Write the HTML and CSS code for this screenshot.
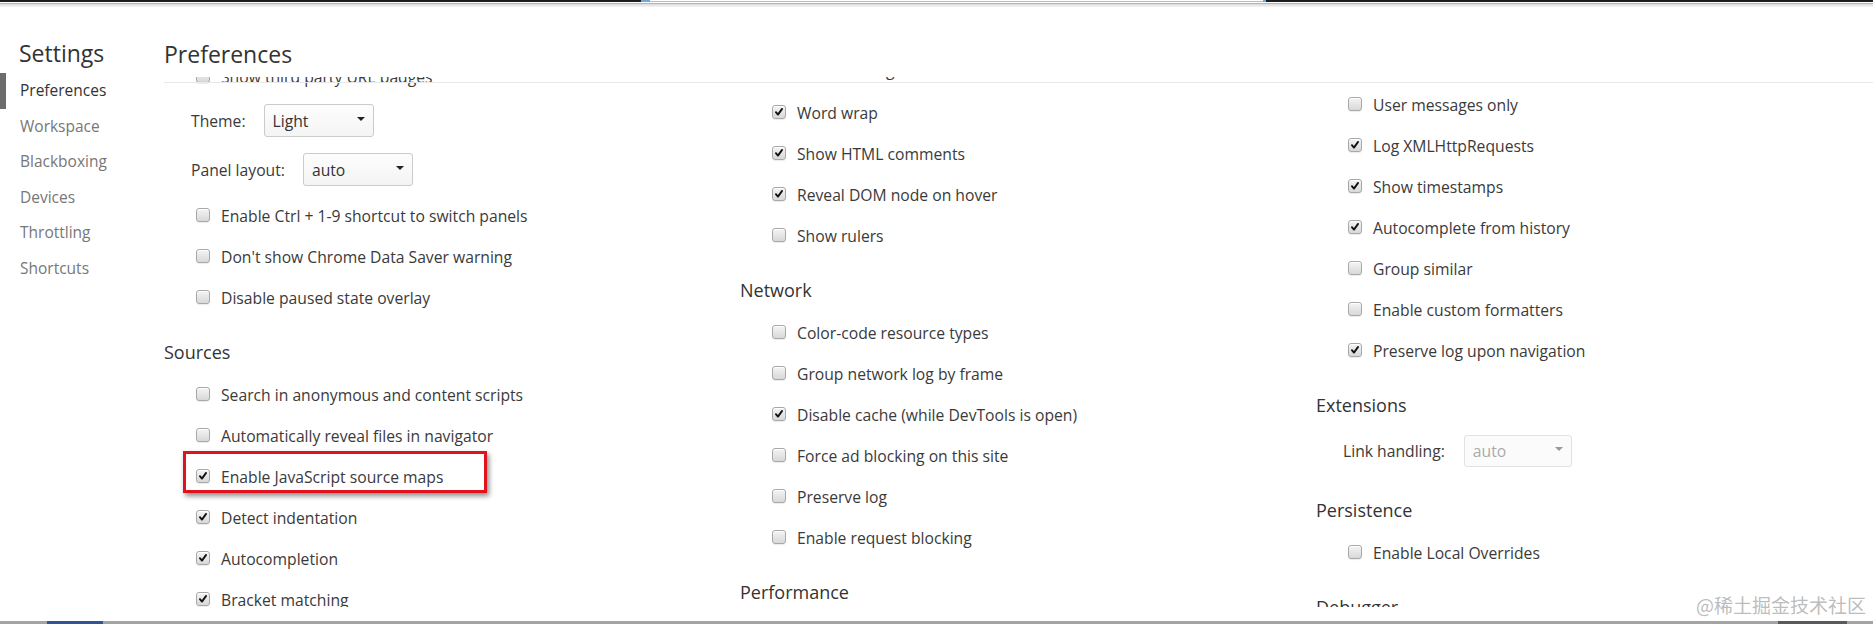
FILE: index.html
```html
<!DOCTYPE html>
<html lang="en">
<head>
<meta charset="utf-8">
<title>Settings</title>
<link rel="stylesheet" href="styles.css">
</head>
<body>
<div class="chrome">
  <div class="chrome-top">
    <span class="seg-dark seg-a"></span>
    <span class="seg-blue seg-b"></span>
    <span class="seg-light"></span>
    <span class="seg-blue seg-c"></span>
    <span class="seg-dark seg-d"></span>
  </div>
  <div class="chrome-gap"></div>
  <div class="chrome-line"></div>
  <div class="chrome-fade"></div>
</div>

<div class="window">
  <aside class="sidebar">
    <h1 class="sb-title">Settings</h1>
    <ul class="sb-list">
      <li class="sb-item active">Preferences</li>
      <li class="sb-item">Workspace</li>
      <li class="sb-item">Blackboxing</li>
      <li class="sb-item">Devices</li>
      <li class="sb-item">Throttling</li>
      <li class="sb-item">Shortcuts</li>
    </ul>
  </aside>

  <main class="main">
    <h2 class="main-title">Preferences</h2>
    <div class="scroll">
      <div class="columns">
        <section class="col col-1">
          <div class="row"><span class="cb"></span>Show third party URL badges</div>
          <div class="select-row"><span class="sel-label">Theme:</span><span class="select"><span>Light</span><span class="caret"></span></span></div>
          <div class="select-row"><span class="sel-label">Panel layout:</span><span class="select"><span>auto</span><span class="caret"></span></span></div>
          <div class="row"><span class="cb"></span>Enable Ctrl + 1-9 shortcut to switch panels</div>
          <div class="row"><span class="cb"></span>Don't show Chrome Data Saver warning</div>
          <div class="row"><span class="cb"></span>Disable paused state overlay</div>
          <h3 class="sec">Sources</h3>
          <div class="row"><span class="cb"></span>Search in anonymous and content scripts</div>
          <div class="row"><span class="cb"></span>Automatically reveal files in navigator</div>
          <div class="row marked"><span class="cb on"><svg viewBox="0 0 14 14"><path d="M3.4 7.2 L5.8 10 L10.6 3.4"/></svg></span>Enable JavaScript source maps<span class="highlight"></span></div>
          <div class="row"><span class="cb on"><svg viewBox="0 0 14 14"><path d="M3.4 7.2 L5.8 10 L10.6 3.4"/></svg></span>Detect indentation</div>
          <div class="row"><span class="cb on"><svg viewBox="0 0 14 14"><path d="M3.4 7.2 L5.8 10 L10.6 3.4"/></svg></span>Autocompletion</div>
          <div class="row"><span class="cb on"><svg viewBox="0 0 14 14"><path d="M3.4 7.2 L5.8 10 L10.6 3.4"/></svg></span>Bracket matching</div>
        </section>

        <section class="col col-2">
          <div class="row lead"><span class="cb"></span>Show user agent shadow DOM</div>
          <div class="row"><span class="cb on"><svg viewBox="0 0 14 14"><path d="M3.4 7.2 L5.8 10 L10.6 3.4"/></svg></span>Word wrap</div>
          <div class="row"><span class="cb on"><svg viewBox="0 0 14 14"><path d="M3.4 7.2 L5.8 10 L10.6 3.4"/></svg></span>Show HTML comments</div>
          <div class="row"><span class="cb on"><svg viewBox="0 0 14 14"><path d="M3.4 7.2 L5.8 10 L10.6 3.4"/></svg></span>Reveal DOM node on hover</div>
          <div class="row"><span class="cb"></span>Show rulers</div>
          <h3 class="sec">Network</h3>
          <div class="row"><span class="cb"></span>Color-code resource types</div>
          <div class="row"><span class="cb"></span>Group network log by frame</div>
          <div class="row"><span class="cb on"><svg viewBox="0 0 14 14"><path d="M3.4 7.2 L5.8 10 L10.6 3.4"/></svg></span>Disable cache (while DevTools is open)</div>
          <div class="row"><span class="cb"></span>Force ad blocking on this site</div>
          <div class="row"><span class="cb"></span>Preserve log</div>
          <div class="row"><span class="cb"></span>Enable request blocking</div>
          <h3 class="sec">Performance</h3>
        </section>

        <section class="col col-3">
          <div class="row"><span class="cb"></span>User messages only</div>
          <div class="row"><span class="cb on"><svg viewBox="0 0 14 14"><path d="M3.4 7.2 L5.8 10 L10.6 3.4"/></svg></span>Log XMLHttpRequests</div>
          <div class="row"><span class="cb on"><svg viewBox="0 0 14 14"><path d="M3.4 7.2 L5.8 10 L10.6 3.4"/></svg></span>Show timestamps</div>
          <div class="row"><span class="cb on"><svg viewBox="0 0 14 14"><path d="M3.4 7.2 L5.8 10 L10.6 3.4"/></svg></span>Autocomplete from history</div>
          <div class="row"><span class="cb"></span>Group similar</div>
          <div class="row"><span class="cb"></span>Enable custom formatters</div>
          <div class="row"><span class="cb on"><svg viewBox="0 0 14 14"><path d="M3.4 7.2 L5.8 10 L10.6 3.4"/></svg></span>Preserve log upon navigation</div>
          <h3 class="sec">Extensions</h3>
          <div class="select-row"><span class="sel-label">Link handling:</span><span class="select disabled"><span>auto</span><span class="caret"></span></span></div>
          <h3 class="sec">Persistence</h3>
          <div class="row"><span class="cb"></span>Enable Local Overrides</div>
          <h3 class="sec">Debugger</h3>
        </section>
      </div>
    </div>
  </main>
</div>

<div class="bottom">
  <span class="bt-gap1"></span>
  <span class="bt-blue"></span>
  <span class="bt-fill"></span>
  <span class="bt-dark"></span>
  <span class="bt-gap2"></span>
</div>

<div class="watermark">@稀土掘金技术社区</div>
</body>
</html>
```

FILE: styles.css
```css
* { box-sizing: border-box; }

html, body {
  margin: 0;
  height: 624px;
  overflow: hidden;
  background: #fff;
}

body {
  font-family: "Open Sans", "Noto Sans", sans-serif;
  color: #3a3a3a;
  display: flex;
  flex-direction: column;
  position: relative;
}

/* top window chrome */
.chrome { height: 7px; flex: none; display: flex; flex-direction: column; }
.chrome-top { height: 2px; display: flex; }
.seg-dark { background: #1e1e1e; }
.seg-a { width: 641px; }
.seg-b { width: 9px; }
.seg-blue { background: #6fa8dc; }
.seg-light { width: 613px; background: #fff; border-bottom: 1px solid #b9b9b9; }
.seg-c { width: 3px; }
.seg-d { flex: 1; }
.chrome-gap { height: 1px; background: #fff; }
.chrome-line { height: 1px; background: #b4b4b4; }
.chrome-fade { height: 3px; background: linear-gradient(#dcdcdc, #f4f4f4); }

/* layout */
.window { flex: 1; display: flex; min-height: 0; }

.sidebar { width: 164px; flex: none; }
.sb-title {
  margin: 0;
  padding: 31px 0 0 19px;
  font-size: 23px;
  line-height: 30px;
  font-weight: 400;
  color: #333;
}
.sb-list { margin: 5px 0 0; padding: 0; list-style: none; }
.sb-item {
  font-size: 15.5px;
  line-height: 35.6px;
  color: #777;
  padding-left: 14px;
  border-left: 6px solid transparent;
}
.sb-item.active { color: #333; border-left-color: #6c6c6c; }

.main { flex: 1; min-width: 0; display: flex; flex-direction: column; }
.main-title {
  margin: 0;
  font-size: 23px;
  line-height: 30px;
  font-weight: 400;
  color: #333;
  padding: 32px 0 8px;
}

.scroll { height: 530px; overflow: hidden; flex: none; position: relative; }
.scroll::before {
  content: "";
  position: absolute;
  left: 0;
  right: 0;
  top: 5px;
  height: 1px;
  background: #e8e8e8;
  z-index: 1;
}
.columns { display: grid; grid-template-columns: 576px 576px 1fr; align-items: start; }
.col-1 { margin-top: -22px; }
.col-2 { margin-top: -31px; }
.col-3 { margin-top: 6px; }

.sec {
  margin: 0;
  font-size: 18px;
  line-height: 22px;
  font-weight: 400;
  color: #333;
  padding: 24px 0 10px;
}

.row {
  height: 41px;
  display: flex;
  align-items: center;
  padding-left: 32px;
  padding-top: 2px;
  font-size: 15.7px;
  white-space: nowrap;
}
.row.lead { height: 45px; }

.cb {
  width: 14px;
  height: 14px;
  flex: none;
  margin-right: 11px;
  border: 1px solid #a8a8a8;
  border-radius: 3px;
  background: linear-gradient(#f4f4f4, #d8d8d8);
  box-shadow: inset 0 1px 0 #fff, 0 1px 1px rgba(0, 0, 0, 0.08);
  position: relative;
  top: -1px;
}
.cb svg { display: block; width: 12px; height: 12px; }
.cb svg path { fill: none; stroke: #111; stroke-width: 2.2; stroke-linecap: round; stroke-linejoin: round; }

.select-row {
  height: 49px;
  display: flex;
  align-items: center;
  padding-left: 27px;
  font-size: 15.7px;
  white-space: nowrap;
}
.select {
  margin-left: 18px;
  width: 110px;
  height: 33px;
  border: 1px solid #cbcbcb;
  border-radius: 3px;
  background: linear-gradient(#fdfdfd, #f4f4f4);
  display: flex;
  align-items: center;
  justify-content: space-between;
  padding: 0 8px 0 8px;
  color: #333;
}
.caret {
  width: 0;
  height: 0;
  border-left: 4px solid transparent;
  border-right: 4px solid transparent;
  border-top: 4px solid #222;
  margin-top: -4px;
}
.select.disabled { margin-left: 19px; border-color: #e2e2e2; background: #fbfbfb; color: #aaa; width: 108px; height: 32px; }
.select.disabled .caret { border-top-color: #999; }

/* red annotation */
.marked { position: relative; }
.highlight {
  position: absolute;
  left: 19px;
  top: -4px;
  width: 304px;
  height: 42px;
  border: 3px solid #e1121b;
  box-shadow: 2px 3px 5px rgba(0, 0, 0, 0.45);
}

/* bottom chrome */
.bottom { height: 3px; flex: none; display: flex; background: #a4a4a4; }
.bt-gap1 { width: 47px; }
.bt-blue { width: 56px; background: #2e5597; }
.bt-fill { flex: 1; }
.bt-dark { width: 69px; background: #5a5a5a; }
.bt-gap2 { width: 26px; }

.watermark {
  position: absolute;
  right: 7px;
  top: 595px;
  font-family: "Noto Sans CJK SC", sans-serif;
  font-size: 19px;
  line-height: 20px;
  color: rgba(150, 150, 150, 0.65);
}
```
